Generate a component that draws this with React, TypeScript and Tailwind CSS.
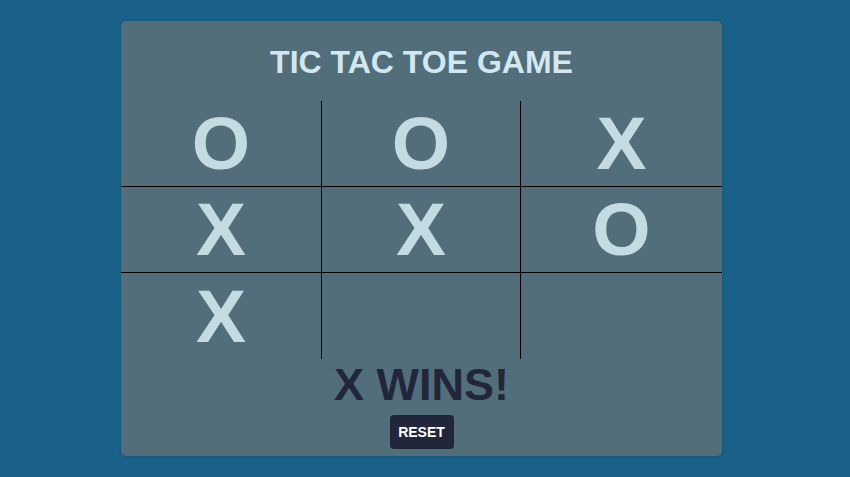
const board = ['O', 'O', 'X', 'X', 'X', 'O', 'X', '', ''];

export default function App() {
  return (
    <div className="min-h-screen w-full bg-[#1a6189] flex justify-center pt-[21px] pr-[7px] font-['Liberation_Sans',Arial,sans-serif]">
      <div className="w-[601px] h-[435px] bg-[#526e7a] rounded-[5px] shadow-[0_0_3px_rgba(0,0,0,0.25)] flex flex-col items-center">
        <h1 className="h-[80px] flex items-center justify-center text-[32px] font-bold text-[#d3e7f0] pt-[1px]">
          TIC TAC TOE GAME
        </h1>
        <div className="grid grid-cols-[201px_199px_201px] w-full">
          {board.map((v, i) => (
            <div
              key={i}
              className={`h-[86px] flex items-center justify-center text-[75px] font-bold text-[#c5dbe2] leading-none ${
                i % 3 !== 2 ? 'border-r border-black' : ''
              } ${i < 6 ? 'border-b border-black' : ''}`}
            >
              {v}
            </div>
          ))}
        </div>
        <div className="text-[45px] font-bold text-[#22263a] leading-none mt-[3px]">X WINS!</div>
        <button className="mt-[8px] w-[64px] h-[34px] bg-[#21263a] text-white text-[14px] font-bold rounded-[4px]">
          RESET
        </button>
      </div>
    </div>
  );
}
